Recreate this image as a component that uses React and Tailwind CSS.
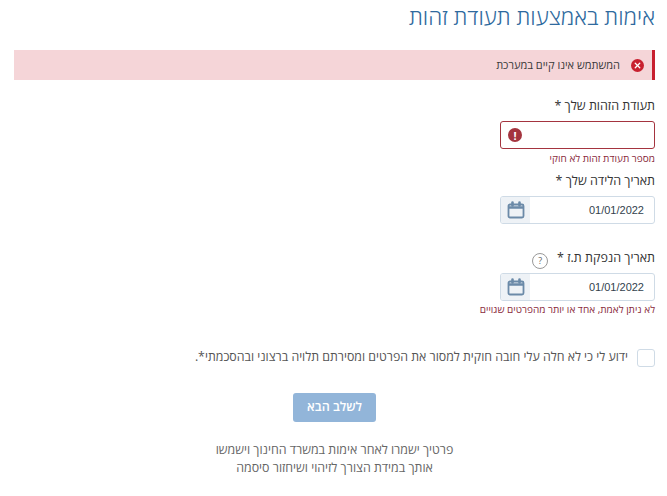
import { X } from "lucide-react";

function CalendarIcon() {
  return (
    <svg width="18" height="18" viewBox="0 0 18 18" fill="none" stroke="#6b8aa8" strokeWidth="1.8">
      <rect x="1.5" y="3.5" width="15" height="13" rx="1.5" />
      <path d="M1.5 6.5h15" strokeWidth="2.4" />
      <path d="M5.5 1.5v3M12.5 1.5v3" strokeWidth="2.6" strokeLinecap="round" />
    </svg>
  );
}

function DateField({ value }) {
  return (
    <div className="flex h-[28px] w-[155px] overflow-hidden rounded-[3px] border border-[#cfdbe6] bg-white">
      <div className="flex flex-1 items-center pr-[10px] font-['Liberation_Sans',sans-serif] text-[11px] text-[#333f4d]">{value}</div>
      <div className="flex w-[29px] items-center justify-center bg-[#eef2f6]">
        <CalendarIcon />
      </div>
    </div>
  );
}

export default function App() {
  return (
    <div dir="rtl" className="h-[496px] w-[667px] overflow-hidden bg-white px-[12px] font-['Open_Sans','Liberation_Sans',sans-serif] text-[#333]">
      <div className="ml-auto w-[641px]">
        <h1 className="h-[50px] pt-[1px] text-[22.5px] font-light leading-[32px] text-[#2f6a9e]">אימות באמצעות תעודת זהות</h1>

        {/* alert */}
        <div className="flex h-[30px] items-center gap-[11px] border-r-[3px] border-[#c8202f] bg-[#f5d5d8] pr-[8px] text-[11px] text-[#3a3a3a]">
          <span className="flex h-[13px] w-[13px] items-center justify-center rounded-full bg-[#c8202f]">
            <X size={9} strokeWidth={3.5} className="text-white" />
          </span>
          <span>המשתמש אינו קיים במערכת</span>
        </div>

        <label className="mt-[16px] block text-[12.5px] leading-[20px] text-[#333]">תעודת הזהות שלך *</label>
        <div className="mt-[5px] flex h-[28px] w-[155px] items-center justify-end rounded-[3px] border border-[#a4343f] bg-white pl-[7px]">
          <span className="flex h-[14px] w-[14px] items-center justify-center rounded-full bg-[#a4343f] text-[11px] font-bold leading-none text-white">!</span>
        </div>
        <p className="mt-[2px] text-[10px] leading-[14px] text-[#8a2b3c]">מספר תעודת זהות לא חוקי</p>

        <label className="mt-[6px] block text-[12.5px] leading-[20px]">תאריך הלידה שלך *</label>
        <div className="mt-[5px]"><DateField value="01/01/2022" /></div>

        <div className="mt-[24px] flex h-[20px] items-center gap-[9px]">
          <label className="text-[12.5px] leading-[20px]">תאריך הנפקת ת.ז *</label>
          <span className="mt-[5px] flex h-[16px] w-[16px] items-center justify-center rounded-full border border-[#999] text-[9px] leading-none text-[#666]">?</span>
        </div>
        <div className="mt-[5px]"><DateField value="01/01/2022" /></div>
        <p className="mt-[1px] text-[10px] leading-[14px] text-[#8a2b3c]">לא ניתן לאמת, אחד או יותר מהפרטים שגויים</p>

        <div className="mt-[33px] flex items-start gap-[9px]">
          <span className="h-[18px] w-[18px] rounded-[3px] border border-[#cfdbe6] bg-white" />
          <span className="text-[12.35px] leading-[16px] text-[#555]">ידוע לי כי לא חלה עלי חובה חוקית למסור את הפרטים ומסירתם תלויה ברצוני ובהסכמתי*.</span>
        </div>

        <div className="mt-[26px] flex justify-center">
          <button className="h-[29px] w-[83px] rounded-[3px] bg-[#92b5d9] text-[12.5px] font-semibold text-white">לשלב הבא</button>
        </div>

        <p className="mt-[19px] text-center text-[12.4px] leading-[18px] text-[#666]">
          פרטיך ישמרו לאחר אימות במשרד החינוך וישמשו
          <br />
          אותך במידת הצורך לזיהוי ושיחזור סיסמה
        </p>
      </div>
    </div>
  );
}
